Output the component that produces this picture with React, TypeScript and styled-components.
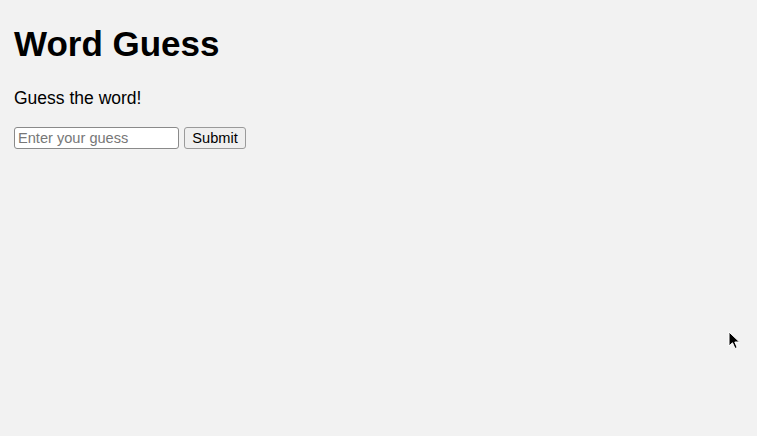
import React from "react";
import styled, { createGlobalStyle } from "styled-components";

const GlobalStyle = createGlobalStyle`
  html, body {
    margin: 0;
    padding: 0;
    background: #f2f2f2;
  }
  body {
    font-family: "Liberation Sans", Arial, Helvetica, sans-serif;
    font-size: 17.5px;
    color: #000;
  }
`;

const Page = styled.main`
  min-height: 436px;
  padding: 24px 14px 0;
  box-sizing: border-box;
`;

const Title = styled.h1`
  font-size: 35px;
  font-weight: bold;
  line-height: 40px;
  margin: 0 0 24px;
`;

const Prompt = styled.p`
  font-size: 17.5px;
  line-height: 20px;
  margin: 0 0 19px;
`;

const GuessForm = styled.form`
  display: flex;
  align-items: center;
  gap: 5px;
`;

const GuessInput = styled.input`
  width: 165px;
  height: 22px;
  box-sizing: border-box;
  padding: 1px 3px;
  font-family: "Liberation Sans", Arial, sans-serif;
  font-size: 14.6px;
  border: 1px solid #8a8a8a;
  border-radius: 3px;
  background: #fff;
  &::placeholder {
    color: #777;
  }
`;

const SubmitButton = styled.button`
  width: 62px;
  height: 22px;
  box-sizing: border-box;
  padding: 0 6px;
  font-family: "Liberation Sans", Arial, sans-serif;
  font-size: 14.6px;
  color: #000;
  border: 1px solid #9a9a9a;
  border-radius: 3px;
  background: #efefef;
`;

const Pointer = styled.svg`
  position: absolute;
  left: 728px;
  top: 331px;
`;

export default function App() {
  return (
    <>
      <GlobalStyle />
      <Page>
        <Title>Word Guess</Title>
        <Prompt>Guess the word!</Prompt>
        <GuessForm onSubmit={(e) => e.preventDefault()}>
          <GuessInput type="text" placeholder="Enter your guess" />
          <SubmitButton type="submit">Submit</SubmitButton>
        </GuessForm>
      </Page>
      <Pointer width="14" height="20" viewBox="0 0 14 20">
        <path
          d="M1 1 L1 15 L4.5 11.8 L7 17.5 L9.2 16.5 L6.8 11 L11.5 11 Z"
          fill="#000"
          stroke="#fff"
          strokeWidth="1"
        />
      </Pointer>
    </>
  );
}
